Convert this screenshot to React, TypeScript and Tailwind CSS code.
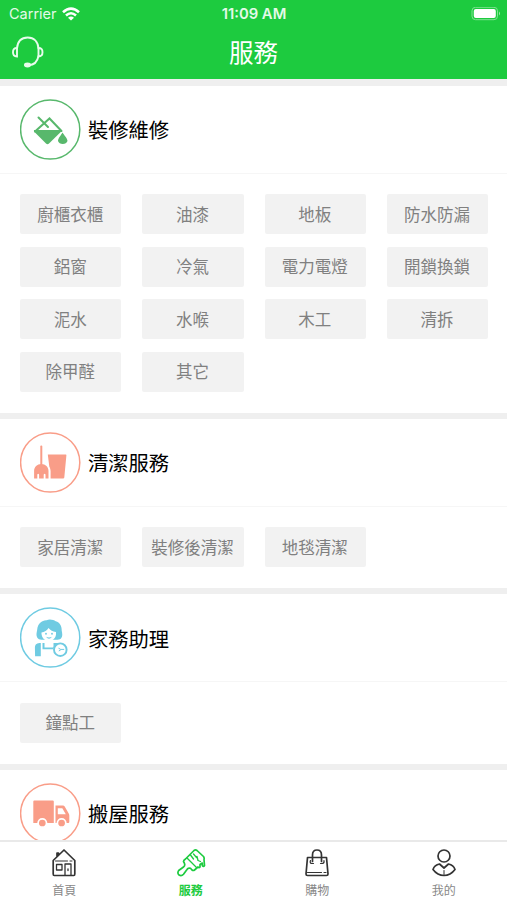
import type { ReactNode } from "react"
import clsx from "clsx"

const RoundIcon = ({ color, children }: { color: string; children: ReactNode }) => (
  <svg viewBox="0 0 61 61" className={clsx("w-[61px] h-[61px] shrink-0", color)} fill="currentColor">
    <circle cx="30.200" cy="30.500" r="29.600" fill="none" stroke="currentColor" strokeWidth="1.500" />
    {children}
  </svg>
)

const PaintIcon = () => (
  <RoundIcon color="text-[#58b86c]">
    <path d="M18.500 18.500L28 28M15 32.500L29.500 19.500L41.500 32" fill="none" stroke="currentColor" strokeWidth="2" strokeLinecap="round" />
    <path d="M14 31h27q.8.800 0 1.700L29 44.500q-1.500 1.300-3 0L14.500 33q-1-1-.5-2z" />
    <path d="M42.500 33.500c1.500 2.500 5 6 5 8.500a5 4.200 0 0 1-9.500 0c0-2.500 3-6 4.500-8.500z" />
  </RoundIcon>
)

const CleanIcon = () => (
  <RoundIcon color="text-[#f99d88]">
    <rect x="20.300" y="13.500" width="2" height="20" rx=".9" />
    <path d="M14.100 46.500V39c0-4 3-7 7.200-7s7.200 3 7.200 7V46.500h-3v-4q-.9-1.500-1.800 0v4h-4.600v-4q-.9-1.500-1.800 0v4z" />
    <path d="M27.800 22.500h18q.7 0 .6.700L44.300 45.500q-.2 1-1.200 1H30.600V39.500c0-2-.6-4-1.300-5z" />
  </RoundIcon>
)

const HelperIcon = () => (
  <RoundIcon color="text-[#6fcbe2]">
    <path d="M18 31.500c-2.500-3-1.200-6-.8-9 .6-6 5-9.500 9.500-9.200 2-1.500 7-.8 9 1 4.200 1 6.200 5 6 9.200.6 3 1.200 6-.7 8-2 1.600-4.500 1.300-6.500 1.300H24c-2 0-4.500.2-6-1.300z" />
    <path d="M21.500 25.500c3-.5 5.500-2 7-4.500 2 2.500 4 3.500 7.500 4v2.500c-.5 4-3.500 6.500-7 6.500s-7-2.500-7.500-7z" fill="#fff" />
    <path d="M26.500 33h5v3q-2.500 2-5 0z" fill="#fff" />
    <ellipse cx="26" cy="26.700" rx=".9" ry="1" />
    <ellipse cx="32" cy="26.700" rx=".9" ry="1" />
    <path d="M26 29.700q3 1.500 6 0-3 4-6 0z" />
    <path d="M20.800 36v13.300h-5.700l-.2-8.500c0-3.800 2.300-4.800 5.900-4.800zM22.500 36h2v4.500h9V36h2c2.500 0 3.700.6 4.200 1.500-4 .5-6 2.800-6.500 4.800H22.500z" />
    <circle cx="40.300" cy="42.700" r="6.300" fill="#fff" stroke="currentColor" strokeWidth="1.900" />
    <path d="M38.500 41.200l2.200 1.200h3.500M38.800 44l2-1.200" fill="none" stroke="currentColor" />
  </RoundIcon>
)

const TruckIcon = () => (
  <RoundIcon color="text-[#f99d88]">
    <path fillRule="evenodd" d="M14.300 17.500h18.500q1 0 1 1V40H13.300V18.500q0-1 1-1zM35.500 22.500H43q1 0 1.700 1l4 7q.6 1 .6 2V39q0 1-1 1H35.500zM37.800 25.300v6h8L42.300 25.300z" />
    <circle cx="22.300" cy="40" r="4.200" stroke="#fff" strokeWidth="1.700" />
    <circle cx="41.600" cy="40" r="4.200" stroke="#fff" strokeWidth="1.700" />
  </RoundIcon>
)

const sections = [
  {
    title: "裝修維修",
    icon: <PaintIcon />,
    items: [
      "廚櫃衣櫃", "油漆", "地板", "防水防漏",
      "鋁窗", "冷氣", "電力電燈", "開鎖換鎖",
      "泥水", "水喉", "木工", "清拆",
      "除甲醛", "其它",
    ],
  },
  {
    title: "清潔服務",
    icon: <CleanIcon />,
    items: ["家居清潔", "裝修後清潔", "地毯清潔"],
  },
  {
    title: "家務助理",
    icon: <HelperIcon />,
    items: ["鐘點工"],
  },
  {
    title: "搬屋服務",
    icon: <TruckIcon />,
    items: [],
  },
]

const TabIcon = ({ children }: { children: ReactNode }) => (
  <svg
    viewBox="0 0 30 30"
    className="w-[30px] h-[30px]"
    fill="none"
    stroke="currentColor"
    strokeWidth="1.700"
    strokeLinecap="round"
    strokeLinejoin="round"
  >
    {children}
  </svg>
)

const tabs = [
  {
    label: "首頁",
    icon: (
      <TabIcon>
        <path d="M4.200 12.500L15 2l10.800 10.500V26q0 1.500-1 1.500H5.200q-1 0-1-1.500zM8 8.500V5h1.500v2" />
        <path d="M6.500 13h12M21 13h2" strokeWidth="1" />
        <path d="M7.500 16.500H13V22H7.500zM16 27V16h6V27M19 21v1.500" strokeWidth="1.300" />
      </TabIcon>
    ),
  },
  {
    label: "服務",
    icon: (
      <TabIcon>
        <path d="M9.500 11L18 2.500q1.500-1.200 3 0l6.500 6q1 1.500.5 3l.5 6q-1 1.700-2.200 0v-2.500l-2.300 1.500v2.500q-1 1.200-2 0L18.500 22q-1.200 1-2.500 0l-1.500-1.700q-2.500-.8-3.500 1.200l-3.500 4.800q-2 2.200-4.500.7-2-2-.3-4.500L7.500 19q2-1.500.8-4l-.8-1.500q0-1.300 2-2.500z" />
        <path d="M11 10l9.500 9.500M14.500 7l3 4M17.500 6l3 3.500M21 8.500l1 4 2.500 1" strokeWidth="1.300" />
      </TabIcon>
    ),
  },
  {
    label: "購物",
    icon: (
      <TabIcon>
        <path d="M5.500 9.500h19L26 26q0 1.500-1.500 1.500h-19Q4 27.500 4 26zM10.500 13.500V7q0-5 4.500-5t4.500 5V13.500" />
        <path d="M8.500 12.500q-1 2.500 1 3h2M19.500 12.500M22 12.500q.5 2.500-1.500 3h-2M5.500 24.500h14M22 24.500h2" strokeWidth="1.200" />
      </TabIcon>
    ),
  },
  {
    label: "我的",
    icon: (
      <TabIcon>
        <circle cx="15" cy="8" r="6" />
        <path d="M10.500 16Q5.500 17 4 21.500q4.500 6 11 6t11-6Q24.500 17 19.500 16L15 20z" />
        <path d="M15 22.500v4.500" strokeWidth="1" />
      </TabIcon>
    ),
  },
]

export default function App() {
  const activeTab = "服務"

  return (
    <div className="flex flex-col h-[900px] w-[507px] overflow-hidden bg-white font-['Noto_Sans_CJK_TC',sans-serif]">
      <header className="h-[79px] shrink-0 bg-[#1dcb3f] text-white">
        <div className="grid grid-cols-3 items-center h-[27px] pl-[9px] pr-[6px] font-['Inter',sans-serif] text-[#e4fae8]">
          <div className="flex items-center gap-[5px] text-[14.500px]">
            <span>Carrier</span>
            <svg viewBox="0 0 18 14" className="w-[18px] h-[14px]" fill="none" stroke="#fff" strokeWidth="2.600">
              <path d="M1 5.200q8-7.200 16 0M4 8.500q5-4.500 10 0" />
              <path d="M9 13.500L6 10.700q3-2.500 6 0z" fill="#fff" stroke="none" />
            </svg>
          </div>
          <span className="pt-px text-center pr-[2px] text-[14.800px] font-semibold whitespace-nowrap">11:09 AM</span>
          <svg viewBox="0 0 30 14" className="w-[30px] h-[14px] justify-self-end">
            <rect x="1" y=".3" width="25.500" height="12.400" rx="3.500" fill="none" stroke="#7fe292" />
            <rect x="2.800" y="2" width="22" height="9" rx="2" fill="#fff" />
            <path d="M28 4.500v4q2-2 0-4z" fill="#9ee9ac" />
          </svg>
        </div>
        <div className="grid grid-cols-3 items-center h-[50px] pl-[11px] pr-[11px]">
          <svg viewBox="0 0 34 34" className="w-[34px] h-[34px]" fill="none" stroke="#e8fceb" strokeWidth="1.900" strokeLinecap="round">
            <path d="M6 13.500C6.500 6.500 10.500 2.500 16.700 2.500S27 6.500 27.500 13.500M27.500 21c-1 5.500-4.500 9-10 9.300" />
            <path d="M6 13v8.500c-3 0-4-1.500-4-4.200s1-4.300 4-4.300zM27.500 13v8.500c3 0 4-1.500 4-4.200s-1-4.300-4-4.300z" />
            <ellipse cx="16.500" cy="30" rx="2.600" ry="1.500" fill="#e8fceb" />
          </svg>
          <h1 className="text-center text-[24.500px] leading-none font-normal">服務</h1>
        </div>
      </header>

      <main className="flex-1 min-h-0 overflow-hidden">
        {sections.map((section) => (
          <section key={section.title} className="border-t-6 first:border-t-7 border-[#efefef]">
            <div className="flex items-center h-[88px] px-5 gap-[7px] border-b border-[#f6f6f6]">
              {section.icon}
              <h2 className="text-[20.300px] leading-none text-black font-normal">{section.title}</h2>
            </div>
            <div className="grid grid-cols-4 gap-x-[21px] gap-y-[12.500px] pl-5 pt-[20.200px] pb-[21.300px] pr-[19px]">
              {section.items.map((item) => (
                <button key={item} className="h-10 pr-px rounded-xs bg-[#f2f2f2] text-[16.500px] leading-none text-[#808080] whitespace-nowrap">
                  {item}
                </button>
              ))}
            </div>
          </section>
        ))}
      </main>

      <nav className="grid grid-cols-4 h-[60px] pl-px shrink-0 border-t-2 border-[#e9e9e9] bg-white">
        {tabs.map((tab) => (
          <button
            key={tab.label}
            className={clsx(
              "flex flex-col items-center pt-[6px]",
              tab.label === activeTab ? "text-[#1dcb3f]" : "text-[#333]"
            )}
          >
            {tab.icon}
            <span
              className={clsx(
                "mt-[6px] text-[12px] leading-none",
                tab.label === activeTab ? "font-bold" : "text-[#888]"
              )}
            >
              {tab.label}
            </span>
          </button>
        ))}
      </nav>
    </div>
  )
}
